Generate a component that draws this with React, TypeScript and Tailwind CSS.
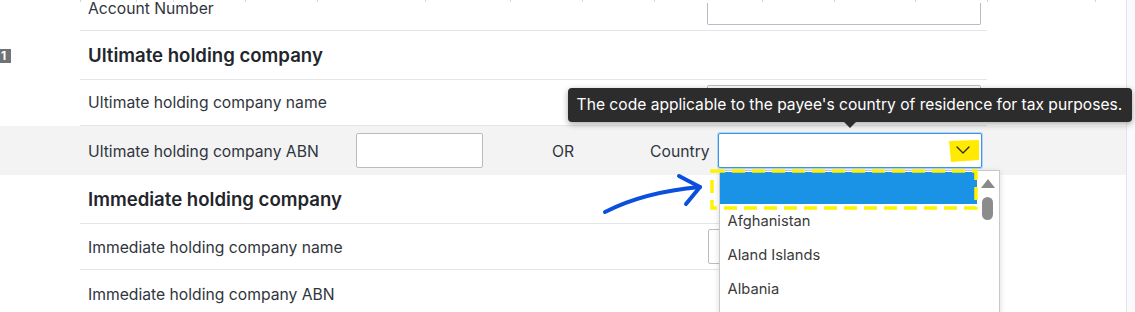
import React from "react";
import { ChevronDown } from "lucide-react";

const ticks = [56, 37, 72, 72, 108, 85, 72, 72, 108, 72, 81, 72, 108, 10];

function Input({ cls }: { cls: string }) {
  return <div className={`bg-white border border-[#b9bcc2] rounded-[2px] ${cls}`} />;
}

export default function App() {
  return (
    <div className="w-[1135px] h-[312px] overflow-hidden bg-white flex font-[Inter,'Noto_Sans',sans-serif] text-[#30353d]">
      <div className="w-[1126px] shrink-0 flex flex-col">
        {/* ticks of the table above */}
        <div className="h-[3px] shrink-0 flex pl-[80px]">
          {ticks.map((w, i) => (
            <div key={i} className="h-[2px] border-l border-[#d4d4d4]" style={{ width: w }} />
          ))}
        </div>

        {/* Account number row */}
        <div className="h-[28px] shrink-0 flex pl-[80px]">
          <div className="w-[907px] border-b border-[#e3e5eb] flex items-start">
            <span className="pl-[8px] text-[15.7px] leading-[20px] -mt-[4px]">Account Number</span>
            <div className="ml-auto mr-[6px] w-[274px] h-[22px] bg-white border-x border-b border-[#b9bcc2] rounded-b-[2px]" />
          </div>
        </div>

        {/* Ultimate heading */}
        <div className="h-[49px] shrink-0 flex items-center">
          <div className="w-[80px] h-full flex items-center">
            <div className="w-[11px] h-[14px] bg-[#707274] text-white text-[12px] leading-[14px] font-bold pl-[1px] mt-[1px]">1</div>
          </div>
          <div className="w-[907px] h-full border-b border-[#e3e5eb] flex items-center">
            <span className="pl-[8px] pt-[1px] text-[18.6px] font-semibold text-[#22262c]">Ultimate holding company</span>
          </div>
        </div>

        {/* Ultimate name */}
        <div className="h-[46px] shrink-0 flex pl-[80px]">
          <div className="w-[907px] border-b border-[#e3e5eb] flex items-center">
            <span className="pl-[8px] pt-[1px] text-[15.7px]">Ultimate holding company name</span>
            <Input cls="ml-auto mr-[6px] w-[274px] h-[35px]" />
          </div>
        </div>

        {/* Ultimate ABN (highlighted) */}
        <div className="h-[49px] shrink-0 flex pl-[80px] bg-[#f3f3f3]">
          <div className="w-[907px] flex items-center">
            <span className="pl-[8px] w-[276px] text-[15.7px] pt-[2px] whitespace-nowrap">Ultimate holding company ABN</span>
            <Input cls="w-[127px] h-[35px]" />
            <span className="ml-[69px] text-[15.7px] pt-[2px]">OR</span>
            <span className="ml-[76px] text-[15.7px] pt-[2px]">Country</span>
            <div className="relative ml-[8px] w-[264px] h-[35px]">
              <div className="w-full h-full bg-white border border-[#3f95e4] rounded-[2px] shadow-[0_0_0_1px_#b3d6f5]" />
              {/* yellow marker on chevron */}
              <svg className="absolute left-[230px] top-[7px]" width="32" height="23" viewBox="0 0 32 23">
                <polygon points="1,1 31,0 31,20 3,22" fill="#ffea00" />
              </svg>
              <ChevronDown className="absolute left-[233px] top-[5px] text-[#2a2a2a]" size={24} strokeWidth={1.3} />

              {/* tooltip */}
              <div className="absolute left-[-150px] bottom-[calc(100%+11px)] w-[564px] h-[34px] bg-[#2c2c2c] rounded-[4px] shadow-[0_2px_6px_rgba(0,0,0,0.35)] flex items-center px-[9px]">
                <span className="text-white text-[15.6px] whitespace-nowrap">
                  The code applicable to the payee's country of residence for tax purposes.
                </span>
                <div className="absolute left-[276px] top-full w-0 h-0 border-l-[6px] border-r-[6px] border-t-[6px] border-l-transparent border-r-transparent border-t-[#2c2c2c]" />
              </div>

              {/* dropdown list */}
              <div className="absolute left-[1px] top-[37px] w-[281px] h-[150px] bg-white border border-[#c9c9c9] shadow-[0_2px_6px_rgba(0,0,0,0.15)] flex z-10">
                <div className="w-[257px] flex flex-col pt-[1px]">
                  <div className="h-[32px] shrink-0 bg-[#1a93e6]" />
                  {["Afghanistan", "Aland Islands", "Albania"].map((c) => (
                    <div key={c} className="h-[34px] shrink-0 flex items-center pl-[8px] text-[14.7px] text-[#3a3a3a]">
                      {c}
                    </div>
                  ))}
                </div>
                <div className="flex-1 flex flex-col items-center pt-[8px]">
                  <div className="w-0 h-0 border-l-[7px] border-r-[7px] border-b-[9px] border-l-transparent border-r-transparent border-b-[#8a8a8a]" />
                  <div className="mt-[9px] w-[11px] h-[23px] rounded-full bg-[#8c8c8c]" />
                </div>
              </div>

              {/* yellow dashed annotation */}
              <svg className="absolute left-[-8px] top-[36px] z-20" width="268" height="41" viewBox="0 0 268 41">
                <rect x="2" y="2" width="264" height="37" fill="none" stroke="#fff200" strokeWidth="3.5" strokeDasharray="13 7" />
              </svg>

              {/* blue hand-drawn arrow */}
              <svg className="absolute left-[-122px] top-[34px] z-20" width="110" height="50" viewBox="0 0 110 50">
                <path d="M9 45 Q 48 25 104 20" fill="none" stroke="#0b4fdf" strokeWidth="4" strokeLinecap="round" />
                <path d="M83 9 L104 20 L90 37" fill="none" stroke="#0b4fdf" strokeWidth="4" strokeLinecap="round" strokeLinejoin="round" />
              </svg>
            </div>
          </div>
        </div>

        {/* Immediate heading */}
        <div className="h-[49px] shrink-0 flex pl-[80px]">
          <div className="w-[907px] border-b border-[#e3e5eb] flex items-center">
            <span className="pl-[8px] pt-[1px] text-[18.6px] font-semibold text-[#22262c]">Immediate holding company</span>
          </div>
        </div>

        {/* Immediate name */}
        <div className="h-[46px] shrink-0 flex pl-[80px]">
          <div className="w-[907px] border-b border-[#e3e5eb] flex items-center">
            <span className="pl-[8px] pt-[2px] text-[15.7px]">Immediate holding company name</span>
            <Input cls="ml-auto mr-[5px] w-[274px] h-[35px]" />
          </div>
        </div>

        {/* Immediate ABN */}
        <div className="h-[46px] shrink-0 flex pl-[80px]">
          <div className="w-[907px] flex items-center">
            <span className="pl-[8px] pt-[3px] text-[15.7px]">Immediate holding company ABN</span>
          </div>
        </div>
      </div>
      <div className="flex-1 border-l border-[#e4e4ee] bg-[#fafafd]" />
    </div>
  );
}
